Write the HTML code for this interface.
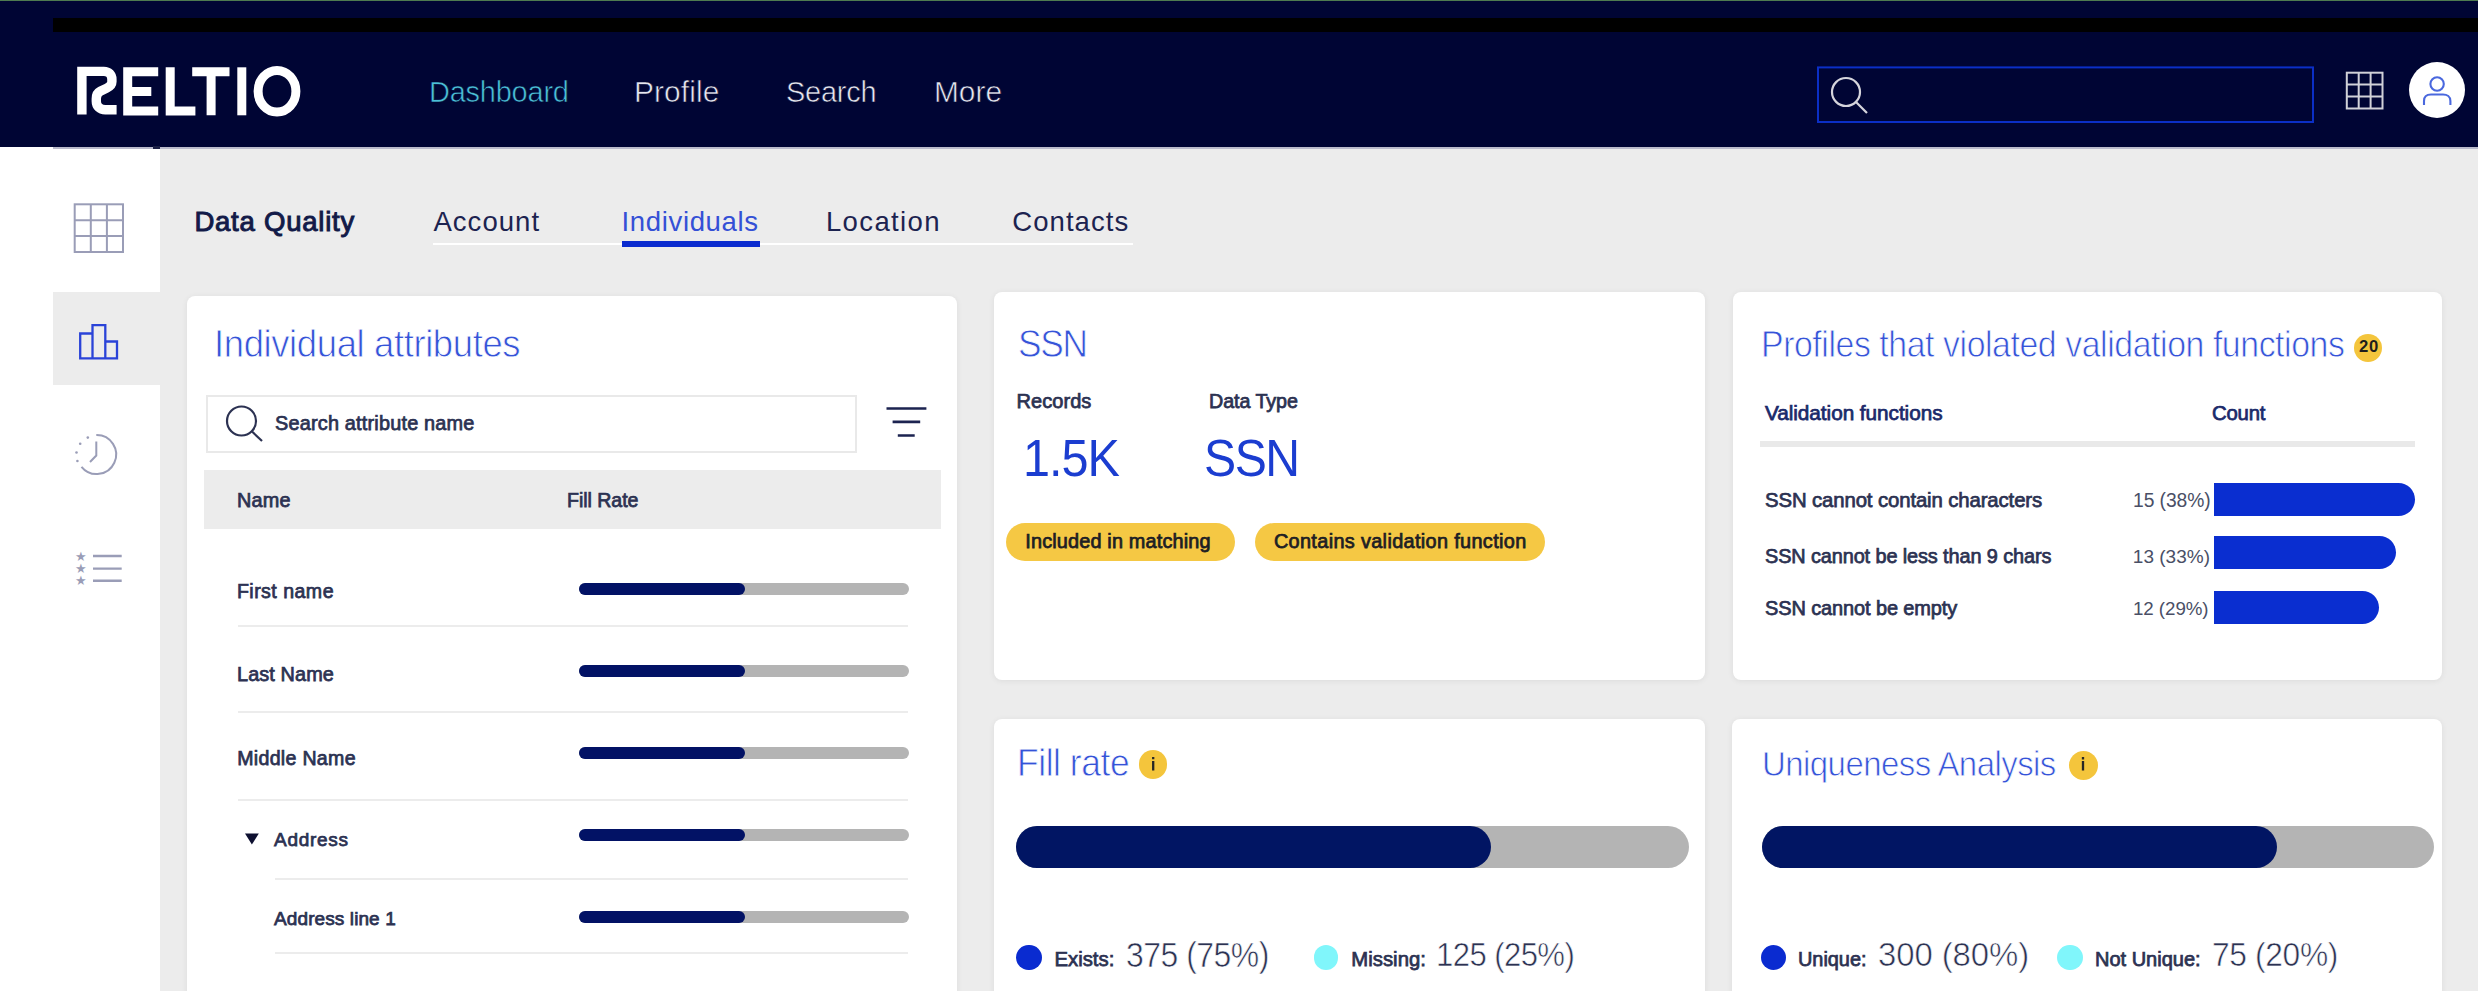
<!DOCTYPE html>
<html><head><meta charset="utf-8"><style>
html,body{margin:0;padding:0;}
body{width:2478px;height:991px;position:relative;overflow:hidden;background:#ececec;font-family:"Liberation Sans", sans-serif;}
.r{position:absolute;}
.t{position:absolute;white-space:nowrap;line-height:1;font-family:"Liberation Sans", sans-serif;}
#wrap{position:absolute;left:0;top:0;width:2478px;height:991px;overflow:hidden;}
</style></head><body><div id="wrap">
<div class="r" style="left:0px;top:0px;width:2478.0px;height:147.0px;background:#000534;"></div>
<div class="r" style="left:0px;top:0px;width:2478.0px;height:1.0px;background:#4e7b50;"></div>
<div class="r" style="left:53px;top:18px;width:2425.0px;height:14.0px;background:#000000;"></div>
<div class="r" style="left:0px;top:147px;width:2478.0px;height:844.0px;background:#ececec;"></div>
<div class="r" style="left:0px;top:147px;width:160.0px;height:844.0px;background:#ffffff;"></div>
<div class="r" style="left:53px;top:147px;width:2425.0px;height:2.0px;background:#babbcc;"></div>
<div class="r" style="left:153px;top:146px;width:7.0px;height:3.0px;background:#1a1f45;"></div>
<div class="r" style="left:53px;top:292px;width:107.0px;height:93.0px;background:#ececec;"></div>
<div class="r" style="left:433px;top:242.6px;width:699.7px;height:2.2px;background:#ffffff;"></div>
<div class="r" style="left:621.5px;top:240.6px;width:138.8px;height:6.7px;background:#0a2bcf;"></div>
<div class="r" style="left:187px;top:296px;width:770.0px;height:714.0px;background:#fff;box-shadow:0 1px 6px rgba(0,0,0,0.07);border-radius:8px;"></div>
<div class="r" style="left:994px;top:292px;width:711.0px;height:388.0px;background:#fff;box-shadow:0 1px 6px rgba(0,0,0,0.07);border-radius:8px;"></div>
<div class="r" style="left:1733px;top:292px;width:709.0px;height:388.0px;background:#fff;box-shadow:0 1px 6px rgba(0,0,0,0.07);border-radius:8px;"></div>
<div class="r" style="left:994px;top:718.5px;width:711.0px;height:291.5px;background:#fff;box-shadow:0 1px 6px rgba(0,0,0,0.07);border-radius:8px;"></div>
<div class="r" style="left:1732.2px;top:719px;width:710.3px;height:291.0px;background:#fff;box-shadow:0 1px 6px rgba(0,0,0,0.07);border-radius:8px;"></div>
<div class="r" style="left:205.5px;top:395px;width:651.0px;height:57.5px;background:#fff;box-sizing:border-box;border:2px solid #e9e9e9;"></div>
<div class="r" style="left:204px;top:470px;width:737.0px;height:59.0px;background:#ececec;"></div>
<div class="r" style="left:579px;top:583.2px;width:329.5px;height:12.0px;background:#b4b4b4;border-radius:6px;"></div>
<div class="r" style="left:579px;top:583.2px;width:166.0px;height:12.0px;background:#021265;border-radius:6px;"></div>
<div class="r" style="left:579px;top:665.2px;width:329.5px;height:12.0px;background:#b4b4b4;border-radius:6px;"></div>
<div class="r" style="left:579px;top:665.2px;width:166.0px;height:12.0px;background:#021265;border-radius:6px;"></div>
<div class="r" style="left:579px;top:747.3px;width:329.5px;height:12.0px;background:#b4b4b4;border-radius:6px;"></div>
<div class="r" style="left:579px;top:747.3px;width:166.0px;height:12.0px;background:#021265;border-radius:6px;"></div>
<div class="r" style="left:579px;top:829.2px;width:329.5px;height:12.0px;background:#b4b4b4;border-radius:6px;"></div>
<div class="r" style="left:579px;top:829.2px;width:166.0px;height:12.0px;background:#021265;border-radius:6px;"></div>
<div class="r" style="left:579px;top:911.4px;width:329.5px;height:12.0px;background:#b4b4b4;border-radius:6px;"></div>
<div class="r" style="left:579px;top:911.4px;width:166.0px;height:12.0px;background:#021265;border-radius:6px;"></div>
<div class="r" style="left:238px;top:625px;width:669.7px;height:2.0px;background:#ececec;"></div>
<div class="r" style="left:238px;top:711.4px;width:669.7px;height:2.0px;background:#ececec;"></div>
<div class="r" style="left:238px;top:799.4px;width:669.7px;height:2.0px;background:#ececec;"></div>
<div class="r" style="left:274.5px;top:878.3px;width:633.2px;height:2.0px;background:#ececec;"></div>
<div class="r" style="left:274.5px;top:952px;width:633.2px;height:2.0px;background:#ececec;"></div>
<div class="r" style="left:1006.3px;top:522.8px;width:229.2px;height:38.2px;background:#f5c844;border-radius:19px;"></div>
<div class="r" style="left:1255.4px;top:522.8px;width:289.4px;height:38.2px;background:#f5c844;border-radius:19px;"></div>
<div class="r" style="left:1760px;top:441px;width:655.0px;height:6.0px;background:#e9e9e9;"></div>
<div class="r" style="left:2214px;top:482.5px;width:201.0px;height:33.0px;background:#0a2ed0;border-radius:0 17px 17px 0;"></div>
<div class="r" style="left:2214px;top:536px;width:182.0px;height:33.0px;background:#0a2ed0;border-radius:0 17px 17px 0;"></div>
<div class="r" style="left:2214px;top:590.6px;width:165.0px;height:33.0px;background:#0a2ed0;border-radius:0 17px 17px 0;"></div>
<div class="r" style="left:1016.4px;top:826.3px;width:672.6px;height:41.5px;background:#b4b4b4;border-radius:21px;"></div>
<div class="r" style="left:1016.4px;top:826.3px;width:474.8px;height:41.5px;background:#011563;border-radius:21px;"></div>
<div class="r" style="left:1762px;top:826.3px;width:671.7px;height:41.3px;background:#b4b4b4;border-radius:21px;"></div>
<div class="r" style="left:1762px;top:826.3px;width:514.7px;height:41.3px;background:#011563;border-radius:21px;"></div>
<div class="r" style="left:1016.4px;top:944.6px;width:25.6px;height:25.6px;border-radius:50%;background:#0a2bd0;"></div>
<div class="r" style="left:1313.6px;top:945.0px;width:24.8px;height:24.8px;border-radius:50%;background:#80f6fb;"></div>
<div class="r" style="left:1760.6px;top:944.8px;width:25.2px;height:25.2px;border-radius:50%;background:#0a2bd0;"></div>
<div class="r" style="left:2057.4px;top:944.8px;width:25.2px;height:25.2px;border-radius:50%;background:#80f6fb;"></div>
<div class="r" style="left:2354.0px;top:334.0px;width:28.0px;height:28.0px;border-radius:50%;background:#f4c53c;"></div>
<div class="r" style="left:1138.9px;top:750.2px;width:28.6px;height:28.6px;border-radius:50%;background:#f4c53c;"></div>
<div class="r" style="left:2068.7px;top:750.5px;width:29.0px;height:29.0px;border-radius:50%;background:#f4c53c;"></div>
<div class="r" style="left:2409.0px;top:62.3px;width:56.0px;height:56.0px;border-radius:50%;background:#ffffff;"></div>

<svg class="r" style="left:0;top:0" width="2478" height="991" viewBox="0 0 2478 991">
 <!-- logo -->
 <g fill="none" stroke="#fff" stroke-width="9">
  <g transform="translate(76.8,67.3)">
   <path d="M5.1,47.1 V4.1 H27 C32,4.1 35.1,7.5 35.1,12 V14.5 C35.1,17.5 33,19.3 30,20.8 L23.5,24 C20.5,25.5 19.5,28 19.5,31.5 V34 C19.5,39 23,42.5 28.5,42.5 H39.8" stroke-width="9.4"/>
   <path d="M81.4,4.4 H50.9 V43.6 H81.4 M50.9,24.1 H74.5" />
   <path d="M93.4,0 V43.6 H118.6" />
   <path d="M115.4,4.4 H152.7 M134.3,4.4 V48" />
   <path d="M165,0 V48" />
   <ellipse cx="200.2" cy="24" rx="18.9" ry="20.8" />
  </g>
 </g>
 <!-- nav search -->
 <rect x="1818" y="67.4" width="495" height="54.6" fill="none" stroke="#0b2fc6" stroke-width="2"/>
 <circle cx="1846" cy="92" r="14" fill="none" stroke="#d5d5dc" stroke-width="2.2"/>
 <line x1="1856" y1="102" x2="1867" y2="113" stroke="#d5d5dc" stroke-width="2.2"/>
 <!-- nav grid -->
 <g fill="none" stroke="#d0d1d8" stroke-width="2">
  <rect x="2346.8" y="72.7" width="35.7" height="35.8"/>
  <path d="M2358.7,72.7 V108.5 M2370.6,72.7 V108.5 M2346.8,84.6 H2382.5 M2346.8,96.5 H2382.5"/>
 </g>
 <!-- avatar person -->
 <g fill="none" stroke="#4a68de" stroke-width="2.1">
  <circle cx="2437.1" cy="84" r="6.7"/>
  <path d="M2424,105 V101 C2424,96.5 2427,94.5 2431,94.5 H2443 C2447,94.5 2450.4,96.5 2450.4,101 V105"/>
 </g>
 <!-- sidebar grid -->
 <g fill="none" stroke="#9a9db7" stroke-width="2">
  <rect x="74.7" y="204.3" width="48.3" height="47.7"/>
  <path d="M90.8,204.3 V252 M106.9,204.3 V252 M74.7,220.2 H123 M74.7,236.1 H123"/>
 </g>
 <!-- sidebar chart -->
 <g fill="none" stroke="#2a43d8" stroke-width="2.3">
  <path d="M80.2,358.3 V333.5 H92.5 V358.3 Z M92.5,358.3 V325.2 H105.3 V358.3 M105.3,341.5 H117 V358.3 H80.2"/>
 </g>
 <!-- clock -->
 <g fill="none" stroke="#9a9db7" stroke-width="2">
  <path d="M96.3,435 A19.5,19.5 0 1 1 81.5,466.8"/>
  <path d="M96.3,441.5 V455.5 L90,462"/>
 </g>
 <g fill="#9a9db7">
  <circle cx="87.8" cy="437.6" r="1.3"/><circle cx="80.2" cy="443.7" r="1.3"/><circle cx="76.5" cy="452.5" r="1.3"/><circle cx="77.4" cy="461" r="1.3"/>
 </g>
 <!-- list -->
 <g stroke="#9a9db7" stroke-width="2.4"><path d="M93,556 H121.7 M93,568.6 H121.7 M93,580.7 H121.7"/></g>
 <g fill="#9a9db7" font-family="Liberation Sans" font-size="13" text-anchor="middle">
  <text x="80.6" y="560.5">★</text><text x="80.6" y="573">★</text><text x="80.6" y="585">★</text>
 </g>
 <!-- card search magnifier -->
 <g fill="none" stroke="#2c3252" stroke-width="2.2">
  <circle cx="241.5" cy="421" r="14.5"/>
  <line x1="252" y1="431.5" x2="262" y2="441"/>
 </g>
 <!-- filter -->
 <g stroke="#1c2350" stroke-width="2.6">
  <path d="M886.5,408.5 H926.4 M892.6,421.9 H920.2 M897.8,435.5 H914.7"/>
 </g>
 <!-- triangle -->
 <path d="M245,833.5 H258.8 L251.9,844.6 Z" fill="#0d1030"/>
 <g stroke="#262626" stroke-width="2.3">
  <path d="M1153.2,756.9 V759.2 M1153.2,760.9 V770.4"/>
  <path d="M2083,757.1 V759.4 M2083,761.1 V770.4"/>
 </g>
</svg>

<div class="t" style="left:429.1px;top:77.3px;font-size:29.86px;letter-spacing:-0.23px;font-weight:400;color:#4bbfd7;-webkit-text-stroke:0.6px #000534;transform:scaleX(0.9701);transform-origin:0 0;">Dashboard</div>
<div class="t" style="left:634.0px;top:77.3px;font-size:29.86px;letter-spacing:0.10px;font-weight:400;color:#e6e7ef;-webkit-text-stroke:0.6px #000534;">Profile</div>
<div class="t" style="left:786.1px;top:77.3px;font-size:29.86px;letter-spacing:-0.24px;font-weight:400;color:#e6e7ef;-webkit-text-stroke:0.6px #000534;transform:scaleX(0.9687);transform-origin:0 0;">Search</div>
<div class="t" style="left:934.0px;top:77.3px;font-size:29.86px;letter-spacing:0.00px;font-weight:400;color:#e6e7ef;-webkit-text-stroke:0.6px #000534;">More</div>
<div class="t" style="left:194.4px;top:208.1px;font-size:27.54px;letter-spacing:0.76px;font-weight:400;color:#121a48;-webkit-text-stroke:1.0px #121a48;">Data Quality</div>
<div class="t" style="left:433.4px;top:208.1px;font-size:27.54px;letter-spacing:1.04px;font-weight:400;color:#1c2350;">Account</div>
<div class="t" style="left:621.6px;top:208.1px;font-size:27.54px;letter-spacing:0.63px;font-weight:400;color:#3450d6;">Individuals</div>
<div class="t" style="left:825.9px;top:208.1px;font-size:27.54px;letter-spacing:1.37px;font-weight:400;color:#1c2350;">Location</div>
<div class="t" style="left:1012.2px;top:208.1px;font-size:27.54px;letter-spacing:1.07px;font-weight:400;color:#1c2350;">Contacts</div>
<div class="t" style="left:213.8px;top:325.2px;font-size:38.84px;letter-spacing:-0.42px;font-weight:400;color:#3553d8;-webkit-text-stroke:0.8px #ffffff;transform:scaleX(0.9399);transform-origin:0 0;">Individual attributes</div>
<div class="t" style="left:275.0px;top:414.4px;font-size:19.86px;letter-spacing:0.20px;font-weight:400;color:#2c3252;-webkit-text-stroke:0.75px #2c3252;">Search attribute name</div>
<div class="t" style="left:236.9px;top:491.0px;font-size:19.86px;letter-spacing:0.20px;font-weight:400;color:#2c3252;-webkit-text-stroke:0.75px #2c3252;">Name</div>
<div class="t" style="left:567.4px;top:491.0px;font-size:19.86px;letter-spacing:-0.05px;font-weight:400;color:#2c3252;-webkit-text-stroke:0.75px #2c3252;transform:scaleX(0.9859);transform-origin:0 0;">Fill Rate</div>
<div class="t" style="left:236.9px;top:581.7px;font-size:19.57px;letter-spacing:0.47px;font-weight:400;color:#2c3252;-webkit-text-stroke:0.75px #2c3252;">First name</div>
<div class="t" style="left:237.0px;top:664.9px;font-size:19.86px;letter-spacing:0.10px;font-weight:400;color:#2c3252;-webkit-text-stroke:0.75px #2c3252;">Last Name</div>
<div class="t" style="left:237.2px;top:748.7px;font-size:19.57px;letter-spacing:0.31px;font-weight:400;color:#2c3252;-webkit-text-stroke:0.75px #2c3252;">Middle Name</div>
<div class="t" style="left:274.1px;top:829.9px;font-size:18.99px;letter-spacing:0.70px;font-weight:400;color:#2c3252;-webkit-text-stroke:0.75px #2c3252;">Address</div>
<div class="t" style="left:274.1px;top:908.6px;font-size:18.99px;letter-spacing:0.10px;font-weight:400;color:#2c3252;-webkit-text-stroke:0.75px #2c3252;">Address line 1</div>
<div class="t" style="left:1017.5px;top:325.1px;font-size:38.55px;letter-spacing:-1.34px;font-weight:400;color:#3553d8;-webkit-text-stroke:0.8px #ffffff;transform:scaleX(0.9142);transform-origin:0 0;">SSN</div>
<div class="t" style="left:1016.6px;top:391.3px;font-size:20.00px;letter-spacing:0.04px;font-weight:400;color:#2c3252;-webkit-text-stroke:0.75px #2c3252;">Records</div>
<div class="t" style="left:1209.2px;top:391.3px;font-size:20.00px;letter-spacing:-0.07px;font-weight:400;color:#2c3252;-webkit-text-stroke:0.75px #2c3252;transform:scaleX(0.9856);transform-origin:0 0;">Data Type</div>
<div class="t" style="left:1022.6px;top:432.2px;font-size:52.46px;letter-spacing:-1.06px;font-weight:400;color:#1b3dd0;transform:scaleX(0.9262);transform-origin:0 0;">1.5K</div>
<div class="t" style="left:1203.5px;top:432.2px;font-size:52.03px;letter-spacing:-1.57px;font-weight:400;color:#1b3dd0;transform:scaleX(0.9253);transform-origin:0 0;">SSN</div>
<div class="t" style="left:1025.3px;top:532.1px;font-size:19.86px;letter-spacing:0.16px;font-weight:400;color:#1e1e24;-webkit-text-stroke:0.75px #1e1e24;">Included in matching</div>
<div class="t" style="left:1273.9px;top:532.1px;font-size:19.86px;letter-spacing:0.35px;font-weight:400;color:#1e1e24;-webkit-text-stroke:0.75px #1e1e24;">Contains validation function</div>
<div class="t" style="left:1761.3px;top:327.2px;font-size:36.52px;letter-spacing:-0.47px;font-weight:400;color:#3553d8;-webkit-text-stroke:0.8px #ffffff;transform:scaleX(0.9271);transform-origin:0 0;">Profiles that violated validation functions</div>
<div class="t" style="left:1765.3px;top:402.4px;font-size:21.01px;letter-spacing:-0.05px;font-weight:400;color:#1b2a6a;-webkit-text-stroke:0.75px #1b2a6a;transform:scaleX(0.9884);transform-origin:0 0;">Validation functions</div>
<div class="t" style="left:2211.6px;top:402.4px;font-size:21.01px;letter-spacing:-0.20px;font-weight:400;color:#1b2a6a;-webkit-text-stroke:0.75px #1b2a6a;transform:scaleX(0.9665);transform-origin:0 0;">Count</div>
<div class="t" style="left:1764.8px;top:489.4px;font-size:21.01px;letter-spacing:-0.13px;font-weight:400;color:#2c3252;-webkit-text-stroke:0.75px #2c3252;transform:scaleX(0.9696);transform-origin:0 0;">SSN cannot contain characters</div>
<div class="t" style="left:2132.8px;top:490.6px;font-size:19.57px;letter-spacing:-0.07px;font-weight:400;color:#4a4f66;transform:scaleX(0.9846);transform-origin:0 0;">15 (38%)</div>
<div class="t" style="left:1764.8px;top:545.9px;font-size:20.43px;letter-spacing:-0.11px;font-weight:400;color:#2c3252;-webkit-text-stroke:0.75px #2c3252;transform:scaleX(0.9735);transform-origin:0 0;">SSN cannot be less than 9 chars</div>
<div class="t" style="left:2132.8px;top:547.1px;font-size:18.99px;letter-spacing:0.02px;font-weight:400;color:#4a4f66;">13 (33%)</div>
<div class="t" style="left:1764.8px;top:597.6px;font-size:20.43px;letter-spacing:-0.11px;font-weight:400;color:#2c3252;-webkit-text-stroke:0.75px #2c3252;transform:scaleX(0.9775);transform-origin:0 0;">SSN cannot be empty</div>
<div class="t" style="left:2132.8px;top:598.8px;font-size:18.99px;letter-spacing:-0.06px;font-weight:400;color:#4a4f66;transform:scaleX(0.9865);transform-origin:0 0;">12 (29%)</div>
<div class="t" style="left:1016.9px;top:743.9px;font-size:38.55px;letter-spacing:-0.50px;font-weight:400;color:#3553d8;-webkit-text-stroke:0.8px #ffffff;transform:scaleX(0.9203);transform-origin:0 0;">Fill rate</div>
<div class="t" style="left:1054.5px;top:949.2px;font-size:20.29px;letter-spacing:0.01px;font-weight:400;color:#2c3252;-webkit-text-stroke:0.75px #2c3252;">Exists:</div>
<div class="t" style="left:1126.1px;top:937.7px;font-size:34.20px;letter-spacing:-0.53px;font-weight:400;color:#2c3252;-webkit-text-stroke:0.6px #ffffff;transform:scaleX(0.9340);transform-origin:0 0;">375 (75%)</div>
<div class="t" style="left:1351.3px;top:949.4px;font-size:20.29px;letter-spacing:0.03px;font-weight:400;color:#2c3252;-webkit-text-stroke:0.75px #2c3252;">Missing:</div>
<div class="t" style="left:1435.7px;top:938.3px;font-size:33.77px;letter-spacing:-0.63px;font-weight:400;color:#2c3252;-webkit-text-stroke:0.6px #ffffff;transform:scaleX(0.9204);transform-origin:0 0;">125 (25%)</div>
<div class="t" style="left:1761.9px;top:746.3px;font-size:35.94px;letter-spacing:-0.62px;font-weight:400;color:#3553d8;-webkit-text-stroke:0.8px #ffffff;transform:scaleX(0.9189);transform-origin:0 0;">Uniqueness Analysis</div>
<div class="t" style="left:1798.4px;top:949.0px;font-size:20.00px;letter-spacing:-0.02px;font-weight:400;color:#2c3252;-webkit-text-stroke:0.75px #2c3252;transform:scaleX(0.9949);transform-origin:0 0;">Unique:</div>
<div class="t" style="left:1878.1px;top:938.2px;font-size:33.19px;letter-spacing:-0.07px;font-weight:400;color:#2c3252;-webkit-text-stroke:0.6px #ffffff;transform:scaleX(0.9911);transform-origin:0 0;">300 (80%)</div>
<div class="t" style="left:2095.2px;top:949.0px;font-size:20.00px;letter-spacing:-0.00px;font-weight:400;color:#2c3252;-webkit-text-stroke:0.75px #2c3252;transform:scaleX(0.9996);transform-origin:0 0;">Not Unique:</div>
<div class="t" style="left:2211.9px;top:938.2px;font-size:33.19px;letter-spacing:-0.35px;font-weight:400;color:#2c3252;-webkit-text-stroke:0.6px #ffffff;transform:scaleX(0.9558);transform-origin:0 0;">75 (20%)</div>
<div class="t" style="left:2358.9px;top:339.1px;font-size:16.67px;letter-spacing:0.84px;font-weight:700;color:#1d1d1d;">20</div>

</div></body></html>
